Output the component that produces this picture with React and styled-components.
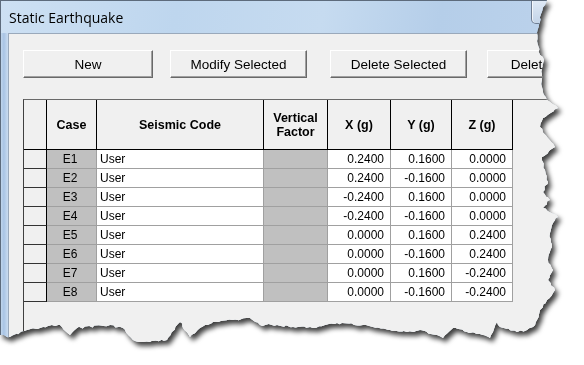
import styled, { createGlobalStyle } from "styled-components";

const GlobalStyle = createGlobalStyle`
  body {
    margin: 0;
    background: #ffffff;
  }
`;

// rough outline of the torn right and bottom edge, clockwise
const EDGE = [
  [0, 0], [547, 0], [545, 5], [541, 14], [540, 22], [537, 33], [538, 45],
  [540, 55], [544, 60], [542, 68], [542, 80], [542, 87], [547, 100], [558, 108],
  [543, 118], [540, 127], [547, 137], [555, 147], [542, 157], [545, 170],
  [548, 182], [543, 192], [550, 200], [543, 208], [558, 217], [553, 223],
  [550, 233], [552, 247], [548, 260], [553, 270], [548, 280], [555, 290],
  [547, 300], [540, 310], [537, 320], [533, 327], [527, 330], [517, 332],
  [500, 327], [497, 322], [490, 338], [483, 335], [467, 332], [453, 328],
  [443, 338], [437, 335], [420, 330], [407, 332], [390, 330], [363, 325],
  [337, 323], [313, 328], [293, 327], [277, 325], [260, 325], [250, 318],
  [233, 320], [213, 322], [200, 328], [190, 337], [180, 322], [167, 340],
  [143, 342], [133, 340], [123, 328], [110, 325], [77, 328], [70, 335],
  [60, 325], [43, 327], [27, 330], [10, 337], [0, 335],
];

function tornPolygon() {
  let seed = 7;
  const rnd = () => {
    seed = (seed * 9301 + 49297) % 233280;
    return seed / 233280 - 0.5;
  };
  const pts = [];
  for (let i = 0; i < EDGE.length - 1; i++) {
    const [x1, y1] = EDGE[i];
    const [x2, y2] = EDGE[i + 1];
    const steps = Math.max(1, Math.round(Math.hypot(x2 - x1, y2 - y1) / 3));
    for (let s = 0; s < steps; s++) {
      const t = s / steps;
      const edge = i > 0 && s > 0;
      const x = x1 + (x2 - x1) * t + (edge ? rnd() * 2 : 0);
      const y = y1 + (y2 - y1) * t + (edge ? rnd() * 2 : 0);
      pts.push(`${x.toFixed(1)}px ${y.toFixed(1)}px`);
    }
  }
  pts.push("0px 335px");
  return pts.join(", ");
}

const TORN = tornPolygon();

const Stage = styled.div`
  width: 584px;
  height: 365px;
  overflow: hidden;
  filter: drop-shadow(3px 4px 2.5px rgba(0, 0, 0, 0.75));
`;

const Window = styled.div`
  width: 584px;
  height: 365px;
  display: flex;
  flex-direction: column;
  clip-path: polygon(${TORN});
  background: #c6daef;
`;

const TitleBar = styled.div`
  height: 33px;
  box-sizing: border-box;
  display: flex;
  align-items: flex-start;
  border-top: 1px solid #5d6b7c;
  border-left: 1px solid #5d6b7c;
  background: linear-gradient(
    100deg,
    #cde0f3 0%,
    #bed6ee 30%,
    #c6dbf0 55%,
    #b5cee9 75%,
    #bdd3ec 100%
  );
`;

const Title = styled.span`
  margin: 7px 0 0 8px;
  font-family: "Open Sans", "Noto Sans", sans-serif;
  font-size: 14px;
  color: #000;
`;

const CloseButton = styled.div`
  margin-left: auto;
  margin-right: 10px;
  width: 43px;
  height: 23px;
  box-sizing: border-box;
  border: 1px solid #6f7e93;
  border-top: none;
  border-radius: 0 0 5px 5px;
  background: linear-gradient(#dfe9f5, #c3d4e8);
  box-shadow: inset 1px 0 0 rgba(255, 255, 255, 0.7);
`;

const Body = styled.div`
  flex: 1;
  display: flex;
  min-height: 0;
`;

const Frame = styled.div`
  width: 7px;
  border-left: 1px solid #5d6b7c;
  background: linear-gradient(to right, #c0d5ec, #a9c4e4 40%, #cadcf0);
`;

const Client = styled.div`
  flex: 1;
  display: flex;
  flex-direction: column;
  min-width: 0;
  box-sizing: border-box;
  padding: 16px 0 0 14px;
  background: #f0f0f0;
  border-top: 1px solid #9aa9bb;
  border-left: 1px solid #9aa9bb;
`;

const ButtonRow = styled.div`
  display: flex;
`;

const Button = styled.div`
  flex-shrink: 0;
  width: ${(p) => p.$w}px;
  margin-left: ${(p) => p.$ml || 0}px;
  height: 28px;
  box-sizing: border-box;
  display: flex;
  align-items: center;
  justify-content: center;
  white-space: nowrap;
  background: #f0f0f0;
  border: 1px solid;
  border-color: #ffffff #696969 #696969 #ffffff;
  box-shadow: inset -1px -1px 0 #a0a0a0;
  font-family: "Liberation Sans", Arial, sans-serif;
  font-size: 13.5px;
  color: #000;
`;

const Grid = styled.div`
  margin-top: 21px;
  flex: 1;
  background: #f0f0f0;
  border-top: 1px solid #696969;
  border-left: 1px solid #404040;
  font-family: "Liberation Sans", Arial, sans-serif;
  color: #000;
`;

const HeadRow = styled.div`
  display: flex;
  height: 50px;
`;

const HeadCell = styled.div`
  flex-shrink: 0;
  width: ${(p) => p.$w}px;
  box-sizing: border-box;
  display: flex;
  align-items: center;
  justify-content: center;
  text-align: center;
  white-space: pre-line;
  border-right: 1px solid #000;
  border-bottom: 1px solid #000;
  background: #f0f0f0;
  font-weight: bold;
  font-size: 12.5px;
  line-height: 14px;
`;

const Row = styled.div`
  display: flex;
  height: 19px;
`;

const CELL_BG = {
  head: "#f0f0f0",
  locked: "#c0c0c0",
  edit: "#ffffff",
};

const Cell = styled.div`
  flex-shrink: 0;
  width: ${(p) => p.$w}px;
  box-sizing: border-box;
  background: ${(p) => CELL_BG[p.$kind]};
  border-right: 1px solid ${(p) => (p.$kind === "head" ? "#000" : "#a0a0a0")};
  border-bottom: 1px solid ${(p) => (p.$kind === "head" ? "#333" : "#a0a0a0")};
  text-align: ${(p) => p.$align || "left"};
  padding: 0 6px 0 3px;
  font-size: 12px;
  line-height: 18px;
  white-space: nowrap;
`;

const COLS = [
  { key: "rh", w: 23, label: "" },
  { key: "case", w: 50, label: "Case" },
  { key: "code", w: 167, label: "Seismic Code" },
  { key: "vf", w: 64, label: "Vertical\nFactor" },
  { key: "x", w: 63, label: "X (g)" },
  { key: "y", w: 61, label: "Y (g)" },
  { key: "z", w: 61, label: "Z (g)" },
];

const ROWS = [
  ["E1", "0.2400", "0.1600", "0.0000"],
  ["E2", "0.2400", "-0.1600", "0.0000"],
  ["E3", "-0.2400", "0.1600", "0.0000"],
  ["E4", "-0.2400", "-0.1600", "0.0000"],
  ["E5", "0.0000", "0.1600", "0.2400"],
  ["E6", "0.0000", "-0.1600", "0.2400"],
  ["E7", "0.0000", "0.1600", "-0.2400"],
  ["E8", "0.0000", "-0.1600", "-0.2400"],
];

export default function App() {
  return (
    <>
      <GlobalStyle />
      <Stage>
        <Window>
          <TitleBar>
            <Title>Static Earthquake</Title>
            <CloseButton />
          </TitleBar>
          <Body>
            <Frame />
            <Client>
              <ButtonRow>
                <Button $w={130}>New</Button>
                <Button $w={137} $ml={17}>Modify Selected</Button>
                <Button $w={137} $ml={23}>Delete Selected</Button>
                <Button $w={137} $ml={20}>Delete Multiple</Button>
              </ButtonRow>
              <Grid>
                <HeadRow>
                  {COLS.map((c) => (
                    <HeadCell key={c.key} $w={c.w}>
                      {c.label}
                    </HeadCell>
                  ))}
                </HeadRow>
                {ROWS.map(([id, x, y, z]) => (
                  <Row key={id}>
                    <Cell $w={23} $kind="head" />
                    <Cell $w={50} $kind="locked" $align="center">
                      {id}
                    </Cell>
                    <Cell $w={167} $kind="edit">
                      User
                    </Cell>
                    <Cell $w={64} $kind="locked" />
                    <Cell $w={63} $kind="edit" $align="right">
                      {x}
                    </Cell>
                    <Cell $w={61} $kind="edit" $align="right">
                      {y}
                    </Cell>
                    <Cell $w={61} $kind="edit" $align="right">
                      {z}
                    </Cell>
                  </Row>
                ))}
              </Grid>
            </Client>
          </Body>
        </Window>
      </Stage>
    </>
  );
}
